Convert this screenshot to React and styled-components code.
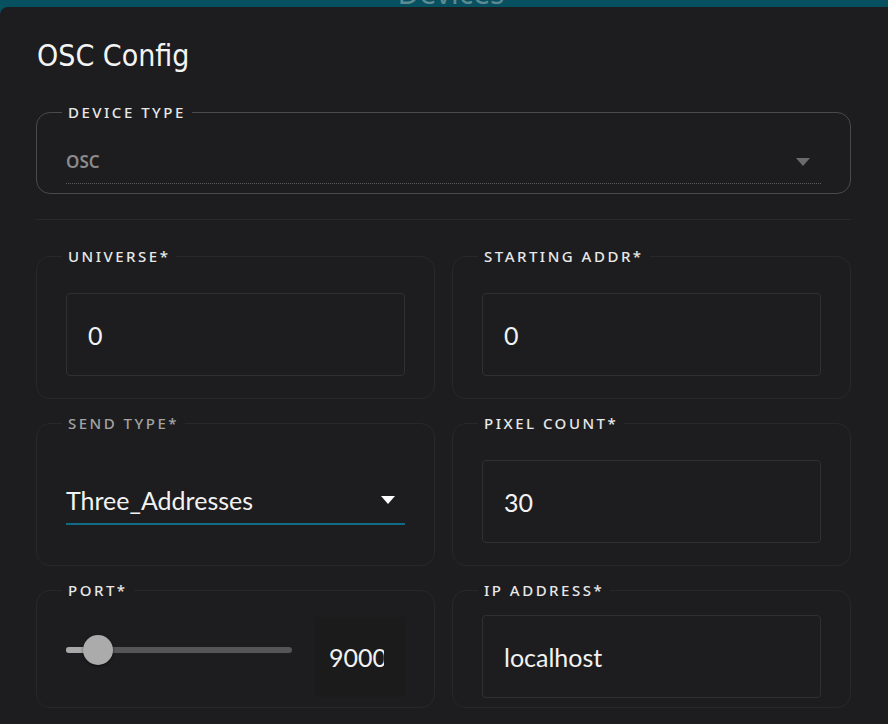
import React from 'react'
import styled, { createGlobalStyle } from 'styled-components'

const GlobalStyle = createGlobalStyle`
  html, body {
    margin: 0;
    padding: 0;
    background: #1d1d1f;
    overflow: hidden;
  }
  body {
    font-family: Lato, 'Noto Sans', sans-serif;
  }
`

const fields = [
  { key: 'universe', label: 'UNIVERSE*', value: '0' },
  { key: 'start', label: 'STARTING ADDR*', value: '0' },
  { key: 'sendType', label: 'SEND TYPE*', value: 'Three_Addresses', kind: 'select', dim: true },
  { key: 'pixels', label: 'PIXEL COUNT*', value: '30' },
  { key: 'port', label: 'PORT*', value: '9000', kind: 'slider', percent: 14 },
  { key: 'ip', label: 'IP ADDRESS*', value: 'localhost', kind: 'tight' },
]

const Caret = ({ color }) => (
  <svg width="14" height="8" viewBox="0 0 14 8">
    <path d="M0 0 L14 0 L7 8 Z" fill={color} />
  </svg>
)

const FieldBody = ({ field }) => {
  if (field.kind === 'select') {
    return (
      <Select>
        <span>{field.value}</span>
        <Caret color="#ffffff" />
      </Select>
    )
  }
  if (field.kind === 'slider') {
    return (
      <SliderRow>
        <Track>
          <Filled style={{ width: `${field.percent}%` }} />
          <Thumb style={{ left: `${field.percent}%` }} />
        </Track>
        <NumberBox>
          <NumberText>{field.value}</NumberText>
        </NumberBox>
      </SliderRow>
    )
  }
  return <InputBox>{field.value}</InputBox>
}

const App = () => (
  <Page>
    <GlobalStyle />
    <TopBar>
      <TopTitle>Devices</TopTitle>
    </TopBar>
    <Dialog>
      <Title>OSC Config</Title>
      <TypeSet>
        <Legend>DEVICE TYPE</Legend>
        <TypeSelect>
          <TypeValue>OSC</TypeValue>
          <Caret color="#6b6b6b" />
        </TypeSelect>
      </TypeSet>
      <Divider />
      <Grid>
        {fields.map(f => (
          <FieldSet key={f.key} $kind={f.kind}>
            <Legend $dim={f.dim}>{f.label}</Legend>
            <FieldBody field={f} />
          </FieldSet>
        ))}
      </Grid>
    </Dialog>
  </Page>
)

const Page = styled.div`
  width: 888px;
  height: 724px;
  display: flex;
  flex-direction: column;
  background: #06505f;
  overflow: hidden;
`

const TopBar = styled.div`
  height: 7px;
  flex: none;
  display: flex;
  justify-content: center;
  align-items: flex-end;
  overflow: hidden;
  padding-left: 14px;
`

const TopTitle = styled.div`
  font-family: 'Noto Sans', sans-serif;
  font-size: 30px;
  line-height: 30px;
  margin-bottom: -1px;
  color: #5d8a93;
  flex: none;
`

const Dialog = styled.div`
  flex: 1;
  background: #1d1d1f;
  border-top-left-radius: 8px;
  padding: 29px 37px 0 36px;
  display: flex;
  flex-direction: column;
`

const Title = styled.h2`
  margin: 0 0 0 1px;
  font-family: 'DejaVu Sans Condensed', 'DejaVu Sans', sans-serif;
  font-weight: 400;
  font-size: 30px;
  line-height: 40px;
  color: #f4f4f4;
`

const Legend = styled.legend`
  padding: 0 6px;
  margin-left: -4px;
  font-family: 'Noto Sans', sans-serif;
  font-size: 15px;
  font-weight: 500;
  letter-spacing: 2.5px;
  line-height: 16px;
  color: ${p => (p.$dim ? '#a3a3a3' : '#e8e8e8')};
`

const TypeSet = styled.fieldset`
  margin: 28px 0 0;
  min-width: 0;
  border: 1px solid #4a4a4c;
  border-radius: 14px;
  padding: 23px 29px 9px;
`

const TypeSelect = styled.div`
  display: flex;
  align-items: center;
  justify-content: space-between;
  padding: 7px 11px 10px 0;
  border-bottom: 1px dotted #5a5a5a;
`

const TypeValue = styled.span`
  font-family: 'Noto Sans', sans-serif;
  font-size: 17px;
  font-weight: 600;
  color: #8b8b8b;
`

const Divider = styled.div`
  height: 1px;
  background: #29292b;
  margin-top: 25px;
`

const Grid = styled.div`
  margin-top: 28px;
  display: grid;
  grid-template-columns: 1fr 1fr;
  column-gap: 17px;
  row-gap: 16px;
`

const padFor = {
  tight: '17px 29px 9px',
  slider: '19px 29px 10px',
  select: '29px 29px 40px',
}

const FieldSet = styled.fieldset`
  margin: 0;
  min-width: 0;
  border: 1px solid #28282a;
  border-radius: 14px;
  padding: ${p => padFor[p.$kind] || '29px 29px 22px'};
`

const valueText = `
  font-family: Lato, 'Noto Sans', sans-serif;
  font-size: 25px;
  color: #f2f2f2;
`

const InputBox = styled.div`
  ${valueText}
  height: 83px;
  box-sizing: border-box;
  border: 1px solid #303032;
  border-radius: 4px;
  padding: 0 21px;
  display: flex;
  align-items: center;
`

const Select = styled.div`
  ${valueText}
  height: 65px;
  box-sizing: border-box;
  display: flex;
  align-items: center;
  justify-content: space-between;
  padding: 16px 10px 0 0;
  border-bottom: 2px solid #0f6b84;
`

const SliderRow = styled.div`
  display: flex;
  align-items: center;
  gap: 23px;
`

const Track = styled.div`
  position: relative;
  flex: 1;
  height: 6px;
  margin-bottom: 14px;
  border-radius: 3px;
  background: #555557;
`

const Filled = styled.div`
  height: 100%;
  border-radius: 3px;
  background: #a8a8a8;
`

const Thumb = styled.div`
  position: absolute;
  top: 50%;
  width: 30px;
  height: 30px;
  border-radius: 50%;
  background: #ababab;
  transform: translate(-50%, -50%);
  box-shadow: 0 1px 3px rgba(0, 0, 0, 0.5);
`

const NumberBox = styled.div`
  width: 90px;
  height: 80px;
  box-sizing: border-box;
  background: #1b1b1c;
  padding-left: 14px;
  display: flex;
  align-items: center;
`

const NumberText = styled.span`
  ${valueText}
  width: 55px;
  overflow: hidden;
  white-space: nowrap;
`

export default App
